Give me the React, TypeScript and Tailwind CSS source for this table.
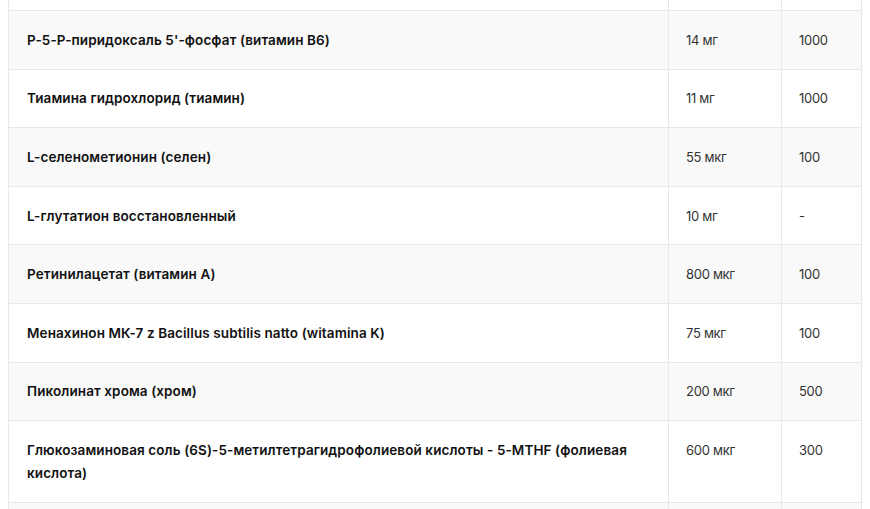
import React from "react";

const rows: [string, string, string][] = [
  ["P-5-P-пиридоксаль 5'-фосфат (витамин B6)", "14 мг", "1000"],
  ["Тиамина гидрохлорид (тиамин)", "11 мг", "1000"],
  ["L-селенометионин (селен)", "55 мкг", "100"],
  ["L-глутатион восстановленный", "10 мг", "-"],
  ["Ретинилацетат (витамин А)", "800 мкг", "100"],
  ["Менахинон МК-7 z Bacillus subtilis natto (witamina K)", "75 мкг", "100"],
  ["Пиколинат хрома (хром)", "200 мкг", "500"],
  ["Глюкозаминовая соль (6S)-5-метилтетрагидрофолиевой кислоты - 5-MTHF (фолиевая кислота)", "600 мкг", "300"],
];

export default function App() {
  return (
    <div
      className="w-[870px] h-[509px] overflow-hidden bg-white pl-[8px] pr-[8px]"
      style={{ fontFamily: "Inter, 'Noto Sans', sans-serif" }}
    >
      <div className="w-[854px] border-l border-r border-[#e8e8e8]">
        <div className="grid grid-cols-[660px_113px_1fr] h-[11px] border-b border-[#e8e8e8] bg-white">
          <div className="border-r border-[#e8e8e8]" />
          <div className="border-r border-[#e8e8e8]" />
          <div />
        </div>
        {rows.map((r, i) => (
          <div
            key={i}
            className={`grid grid-cols-[660px_113px_1fr] border-b border-[#e8e8e8] ${i % 2 === 0 ? "bg-[#f9f9f9]" : "bg-white"}`}
          >
            <div className="border-r border-[#e8e8e8] pl-[18px] pr-[18px] pt-[17.8px] pb-[16.8px] leading-[23px] text-[13.5px] font-semibold text-[#111] tracking-[0.1px]">
              {r[0]}
            </div>
            <div className="border-r border-[#e8e8e8] pl-[17px] pt-[17.8px] pb-[16.8px] leading-[23px] text-[13px] text-[#333] tracking-[-0.3px]">
              {r[1]}
            </div>
            <div className="pl-[17px] pt-[17.8px] pb-[16.8px] leading-[23px] text-[13px] text-[#333] tracking-[-0.3px]">
              {r[2]}
            </div>
          </div>
        ))}
        <div className="grid grid-cols-[660px_113px_1fr] h-[58px] bg-[#f9f9f9]">
          <div className="border-r border-[#e8e8e8]" />
          <div className="border-r border-[#e8e8e8]" />
          <div />
        </div>
      </div>
    </div>
  );
}
